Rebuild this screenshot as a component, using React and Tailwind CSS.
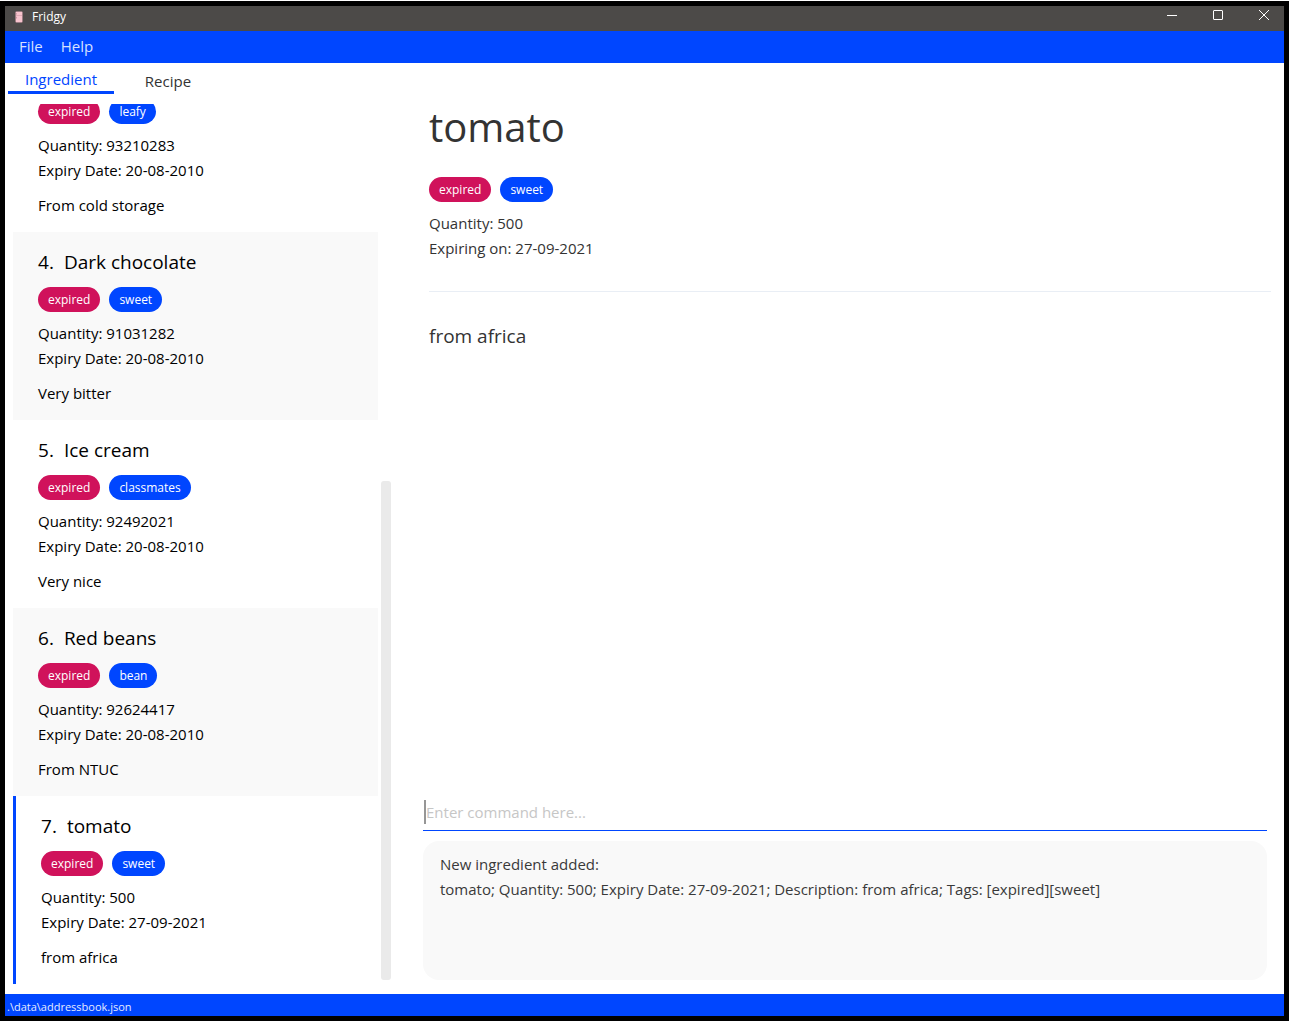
import React from "react";

const ingredients = [
  { tag: "leafy", quantity: "93210283", date: "20-08-2010", note: "From cold storage" },
  { id: 4, name: "Dark chocolate", tag: "sweet", quantity: "91031282", date: "20-08-2010", note: "Very bitter", shaded: true },
  { id: 5, name: "Ice cream", tag: "classmates", quantity: "92492021", date: "20-08-2010", note: "Very nice" },
  { id: 6, name: "Red beans", tag: "bean", quantity: "92624417", date: "20-08-2010", note: "From NTUC", shaded: true },
  { id: 7, name: "tomato", tag: "sweet", quantity: "500", date: "27-09-2021", note: "from africa", selected: true },
];

function Tags({ tag }) {
  return (
    <div className="flex gap-[9px] text-[12px] leading-[25px] text-white">
      <span className="rounded-full bg-[#d0125b] px-2.5">expired</span>
      <span className="rounded-full bg-[#0046ff] px-2.5">{tag}</span>
    </div>
  );
}

function Ingredient({ item }) {
  return (
    <li
      className={`shrink-0 pl-[25px] pb-3.5 text-black ${item.shaded ? "bg-[#f9f9f9]" : "bg-white"} ${
        item.selected ? "border-l-[3px] border-[#0046ff]" : ""
      }`}
    >
      {item.name && (
        <h2 className="flex gap-2.5 pt-4 pb-[11px] text-[19px] leading-7">
          <span>{item.id}.</span>
          <span>{item.name}</span>
        </h2>
      )}
      <Tags tag={item.tag} />
      <p className="pt-[9px]">Quantity: {item.quantity}</p>
      <p>Expiry Date: {item.date}</p>
      <p className="pt-2.5">{item.note}</p>
    </li>
  );
}

function FridgeIcon() {
  return (
    <svg width="8" height="12" viewBox="0 0 8 12" aria-hidden="true">
      <rect x="0.5" y="0.5" width="7" height="11" rx="1" fill="#f7c3cd" stroke="#8d6d73" strokeWidth="0.4" />
      <path d="M1 4.5H7" stroke="#d9a3af" strokeWidth="0.8" />
      <path d="M1.5 2.2V3.5M1.5 5.8V7.5" stroke="#b98690" strokeWidth="0.7" />
    </svg>
  );
}

function TitleBar() {
  return (
    <header className="flex h-[25px] shrink-0 items-start bg-[#4c4a48] text-white">
      <div className="flex h-[21px] flex-1 items-center gap-[9px] pl-2.5">
        <FridgeIcon />
        <h1 className="text-[12px] leading-5">Fridgy</h1>
      </div>
      <div className="-mr-[3px] flex h-[18px] items-center">
        <button aria-label="Minimize" className="flex w-[46px] justify-center">
          <svg width="10" height="10" viewBox="0 0 10 10" stroke="currentColor">
            <path d="M0 5.5H10" />
          </svg>
        </button>
        <button aria-label="Maximize" className="flex w-[46px] justify-center">
          <svg width="10" height="10" viewBox="0 0 10 10" fill="none" stroke="currentColor">
            <rect x="0.5" y="0.5" width="9" height="9" rx="0.5" />
          </svg>
        </button>
        <button aria-label="Close" className="flex w-[46px] justify-center">
          <svg width="10" height="10" viewBox="0 0 10 10" stroke="currentColor">
            <path d="M0 0L10 10M10 0L0 10" />
          </svg>
        </button>
      </div>
    </header>
  );
}

export default function App() {
  return (
    <div className="flex h-screen flex-col bg-white pt-px pb-0.5 font-['Open_Sans',sans-serif] text-[15px] leading-[25px] text-[#333333]">
      <div className="flex min-h-0 flex-1 flex-col overflow-hidden border-5 border-black">
        <TitleBar />
        <nav className="flex h-8 shrink-0 items-start gap-[18px] bg-[#0046ff] pt-[3px] pl-3.5 text-[#d6e0ff]">
          <button>File</button>
          <button>Help</button>
        </nav>

        <main className="flex min-h-0 flex-1">
          <section className="flex w-[392px] shrink-0 flex-col">
            <div role="tablist" className="flex h-[41px] shrink-0 items-start pl-[3px]">
              <button role="tab" aria-selected="true" className="h-[31px] w-[106px] border-b-3 border-[#0046ff] pt-1 text-[#0046ff]">
                Ingredient
              </button>
              <button role="tab" aria-selected="false" className="h-[31px] w-[108px] pt-1.5">
                Recipe
              </button>
            </div>
            <div className="flex min-h-0 flex-1 gap-[3px] pb-2.5 pl-2">
              <ul className="flex w-[365px] flex-col justify-end overflow-hidden">
                {ingredients.map((item) => (
                  <Ingredient key={item.quantity} item={item} />
                ))}
              </ul>
              <div className="flex w-2.5 flex-col justify-end pb-1">
                <div className="h-[57%] rounded-[3px] bg-[#eaeaea]" />
              </div>
            </div>
          </section>

          <section className="flex min-w-0 flex-1 flex-col pr-[17px] pb-3.5 pl-[26px]">
            <article className="-mr-1 ml-1.5 flex-1 pt-9">
              <h2 className="text-[40px] leading-14">tomato</h2>
              <div className="pt-[22px]">
                <Tags tag="sweet" />
              </div>
              <p className="pt-[9px]">Quantity: 500</p>
              <p>Expiring on: 27-09-2021</p>
              <hr className="mt-[30px] border-[#e9eef5]" />
              <p className="pt-[30px] text-[19px] leading-7">from africa</p>
            </article>

            <div className="flex h-[34px] shrink-0 items-end border-b border-[#0046ff] pb-1.5">
              <input
                type="text"
                aria-label="Command"
                placeholder="Enter command here..."
                className="ml-px h-6 w-full border-l-2 border-[#969696] outline-none placeholder:text-[#c6c6c6]"
              />
            </div>
            <output className="mt-2.5 block h-[139px] shrink-0 rounded-2xl bg-[#f9f9f9] px-[17px] py-[11px] text-[#393939]">
              <p>New ingredient added:</p>
              <p>tomato; Quantity: 500; Expiry Date: 27-09-2021; Description: from africa; Tags: [expired][sweet]</p>
            </output>
          </section>
        </main>

        <footer className="h-[22px] shrink-0 bg-[#0046ff] px-0.5 text-[11px] leading-[25px] text-[#e6ecff]">
          .\data\addressbook.json
        </footer>
      </div>
    </div>
  );
}
